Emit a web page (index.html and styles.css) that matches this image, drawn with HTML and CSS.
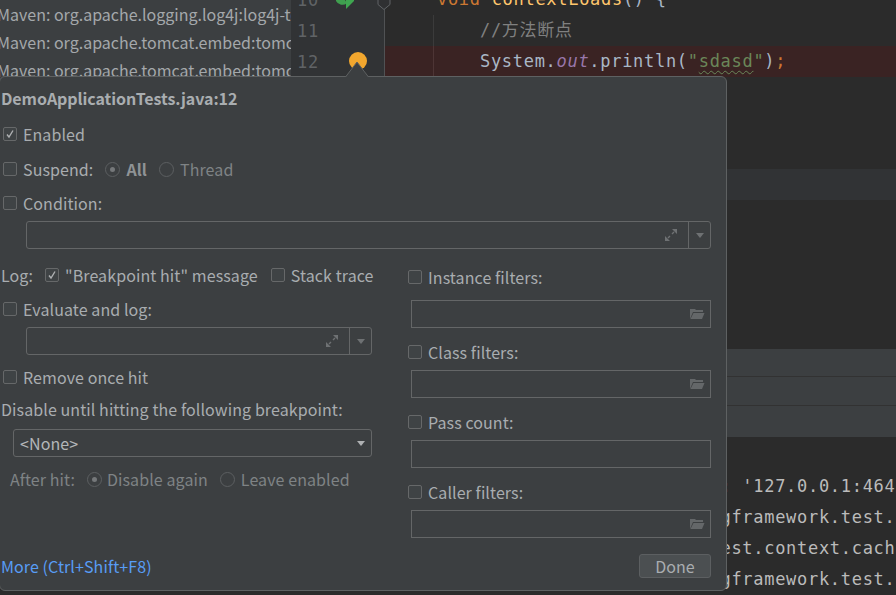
FILE: index.html
```html
<!DOCTYPE html>
<html lang="en">
<head>
<meta charset="utf-8">
<title>Breakpoint popup</title>
<link rel="stylesheet" href="styles.css">
</head>
<body>
<div class="app">
  <div class="upper">
    <div class="tree">
      <div class="tree-row">Maven: org.apache.logging.log4j:log4j-to-slf4j:2.13.3</div>
      <div class="tree-row">Maven: org.apache.tomcat.embed:tomcat-embed-core:9.0.37</div>
      <div class="tree-row">Maven: org.apache.tomcat.embed:tomcat-embed-websocket:9.0.37</div>
    </div>
    <div class="gutter">
      <div class="gutter-row"><span class="ln">10</span>
        <svg class="run-icon" width="20" height="10" viewBox="0 0 20 10"><path d="M1 1a7 7 0 0 0 11 2L10 0H1z" fill="#3f9f4f"/><path d="M11 0h8v1l-8 8z" fill="#3fa650"/></svg>
      </div>
      <div class="gutter-row"><span class="ln">11</span></div>
      <div class="gutter-row"><span class="ln">12</span><span class="bp"></span></div>
      <svg class="diamond" width="14" height="11" viewBox="0 0 14 11"><path d="M1 -4v8.500l6 5 6-5v-8.500" fill="#2f3032" stroke="#606366" stroke-width="1"/></svg>
    </div>
    <div class="code">
      <div class="code-row"><span class="kw">void</span> <span class="fn">contextLoads</span>() {</div>
      <div class="code-row code-in"><span class="cm">//方法断点</span></div>
      <div class="code-row code-in code-hit">System.<span class="fld">out</span>.println(<span class="str">"<span class="squig">sdasd</span>"</span>)<span class="kw">;</span></div>
    </div>
  </div>
  <div class="band"></div>
  <div class="blank"></div>
  <div class="tool-row tool-a"></div>
  <div class="tool-row tool-b"></div>
  <div class="tool-row tool-c"></div>
  <div class="console">
    <div class="con-line">: '127.0.0.1:46416', transport: 'socket'</div>
    <div class="con-line">gframework.test.context.support</div>
    <div class="con-line">est.context.cache.DefaultCache</div>
    <div class="con-line">gframework.test.context.support</div>
  </div>
</div>

<div class="popup">
  <svg class="caret" width="24" height="16" viewBox="0 0 24 16"><path d="M0.500 16L12 1l11.500 15" fill="#3c3f41" stroke="#5e6162" stroke-width="1"/></svg>
  <div class="title">DemoApplicationTests.java:12</div>
  <div class="row r-enabled">
    <span class="cb"><svg width="12" height="12" viewBox="0 0 12 12"><path d="M3 6.500l2 2.500 4-6.500" fill="none" stroke="#afb1b3" stroke-width="1.400"/></svg></span>
    <span>Enabled</span>
  </div>
  <div class="row r-suspend">
    <span class="cb"></span><span>Suspend:</span>
    <span class="radio on radio-all"></span><span class="dim-b">All</span>
    <span class="radio radio-thread"></span><span class="dim">Thread</span>
  </div>
  <div class="row r-cond"><span class="cb"></span><span>Condition:</span></div>
  <div class="field f-cond">
    <svg class="expand" width="14" height="14" viewBox="0 0 14 14"><path d="M8 1h5v5zM1 13V8l5 5z" fill="#6e7173"/><path d="M10 4L8 6M6 8L4 10" stroke="#6e7173" stroke-width="1.400"/></svg>
    <span class="drop"><i class="tri dimtri"></i></span>
  </div>

  <div class="cols">
    <div class="left">
      <div class="row log">
        <span class="log-label">Log:</span>
        <span class="cb"><svg width="12" height="12" viewBox="0 0 12 12"><path d="M3 6.500l2 2.500 4-6.500" fill="none" stroke="#afb1b3" stroke-width="1.400"/></svg></span>
        <span>"Breakpoint hit" message</span>
        <span class="cb cb-stack"></span><span>Stack trace</span>
      </div>
      <div class="row r-eval"><span class="cb"></span><span>Evaluate and log:</span></div>
      <div class="field f-eval">
        <svg class="expand" width="14" height="14" viewBox="0 0 14 14"><path d="M8 1h5v5zM1 13V8l5 5z" fill="#6e7173"/><path d="M10 4L8 6M6 8L4 10" stroke="#6e7173" stroke-width="1.400"/></svg>
        <span class="drop"><i class="tri dimtri"></i></span>
      </div>
      <div class="row r-remove"><span class="cb"></span><span>Remove once hit</span></div>
      <div class="plain r-disable">Disable until hitting the following breakpoint:</div>
      <div class="field f-select"><span class="sel-text">&lt;None&gt;</span><i class="tri"></i></div>
      <div class="row r-after dim">
        <span>After hit:</span>
        <span class="radio on radio-dis"></span><span>Disable again</span>
        <span class="radio radio-leave"></span><span>Leave enabled</span>
      </div>
    </div>
    <div class="right">
      <div class="row rr first"><span class="cb"></span><span>Instance filters:</span></div>
      <div class="field f-box f-first"><svg class="folder" width="16" height="12" viewBox="0 0 16 12"><path d="M1 1h5l1 1h7v2H4L1 11z" fill="#646769"/><path d="M4.500 5H15.500L13 11H1.500z" fill="#646769"/></svg></div>
      <div class="row rr"><span class="cb"></span><span>Class filters:</span></div>
      <div class="field f-box"><svg class="folder" width="16" height="12" viewBox="0 0 16 12"><path d="M1 1h5l1 1h7v2H4L1 11z" fill="#646769"/><path d="M4.500 5H15.500L13 11H1.500z" fill="#646769"/></svg></div>
      <div class="row rr"><span class="cb"></span><span>Pass count:</span></div>
      <div class="field f-box"></div>
      <div class="row rr"><span class="cb"></span><span>Caller filters:</span></div>
      <div class="field f-box"><svg class="folder" width="16" height="12" viewBox="0 0 16 12"><path d="M1 1h5l1 1h7v2H4L1 11z" fill="#646769"/><path d="M4.500 5H15.500L13 11H1.500z" fill="#646769"/></svg></div>
    </div>
  </div>

  <div class="footer">
    <a class="more">More (Ctrl+Shift+F8)</a>
    <button class="done">Done</button>
  </div>
</div>
</body>
</html>
```
FILE: styles.css
```css
* { box-sizing: border-box; }
html, body { margin: 0; padding: 0; width: 896px; height: 595px; overflow: hidden; background: #2b2b2b; }
body { position: relative; font-family: "Noto Sans CJK SC", "Noto Sans", sans-serif; font-size: 16px; letter-spacing: 0.09px; color: #a9adb0; }

/* background IDE */
.app { display: flex; flex-direction: column; height: 595px; overflow: hidden; }
.upper { display: flex; height: 169px; flex: none; }
.tree { width: 291px; background: #3c3f41; overflow: hidden; flex: none; letter-spacing: 0; }
.tree-row { height: 28px; line-height: 28px; white-space: nowrap; margin-left: -3px; color: #a4a8ab; }
.gutter { position: relative; z-index: 1; width: 94px; flex: none; background: #313335; border-right: 1px solid #505254; }
.gutter-row { position: relative; height: 31px; display: flex; align-items: center; }
.gutter-row:first-child { margin-top: -16px; }
.ln { font-family: "DejaVu Sans Mono", monospace; font-size: 17px; letter-spacing: 0.7px; color: #606366; margin-left: 6px; }
.run-icon { position: absolute; left: 44px; top: 16px; }
.bp { position: absolute; left: 58px; top: 6px; width: 18px; height: 18px; border-radius: 50%; background: #f2a72e; }
.diamond { position: absolute; left: 86px; top: 0; }
.code { flex: 1; background: #2b2b2b; overflow: hidden; font-family: "DejaVu Sans Mono", "Noto Sans CJK SC", monospace; font-size: 17px; letter-spacing: 0.7px; color: #a9b7c6; }
.code-row { height: 31px; line-height: 31px; white-space: pre; padding-left: 52px; }
.code-row:first-child { margin-top: -16px; }
.code-in { padding-left: 95px; background: linear-gradient(#3b3b3b, #3b3b3b) 48px 0 / 1px 100% no-repeat; }
.code-hit { background-color: #3a2323; background-image: linear-gradient(#4d3535, #4d3535); }
.kw { color: #cc7832; }
.fn { color: #ffc66d; }
.cm { color: #808080; }
.fld { color: #9876aa; font-style: italic; }
.str { color: #6a8759; }
.squig { text-decoration: underline wavy #6a8759 1px; text-underline-offset: 3px; }
.band { height: 31px; background: #313335; flex: none; }
.blank { height: 149px; background: #2b2b2b; flex: none; }
.tool-row { background: #3c3f41; flex: none; }
.tool-a { height: 28px; border-bottom: 1px solid #323232; }
.tool-b { height: 29px; border-bottom: 1px solid #323232; }
.tool-c { height: 31px; }
.console { flex: 1; background: #2b2b2b; padding: 34px 0 0 720.500px; font-family: "DejaVu Sans Mono", monospace; font-size: 17px; letter-spacing: 0.7px; color: #bbbbbb; overflow: hidden; }
.con-line { height: 31px; line-height: 31px; white-space: pre; }

/* popup */
.popup { position: absolute; z-index: 2; left: -1px; top: 76px; width: 728px; height: 515px; background: #3c3f41; border: 1px solid #5e6162; border-radius: 6px; padding: 9px 15px 0 0; }
.caret { position: absolute; left: 345px; top: -16px; }
.title { height: 24px; line-height: 24px; font-weight: 700; letter-spacing: -0.07px; padding-left: 1px; }
.row { display: flex; align-items: center; height: 22px; padding-left: 3px; white-space: nowrap; }
.plain { height: 22px; line-height: 22px; white-space: nowrap; padding-left: 1px; }
.cb { width: 14px; height: 14px; flex: none; border: 1px solid #666869; border-radius: 2px; margin-right: 6px; display: flex; align-items: center; justify-content: center; background: #3f4345; }
.radio { position: relative; width: 15px; height: 15px; border: 1px solid #5c5f61; border-radius: 50%; flex: none; display: block; }
.radio.on::after { content: ""; position: absolute; left: 4px; top: 4px; width: 5px; height: 5px; border-radius: 50%; background: #75787a; }
.dim { color: #7f8385; }
.dim-b { color: #8f9395; font-weight: 700; }
.r-enabled { margin-top: 13px; }
.r-suspend { margin-top: 13px; }
.r-cond { margin-top: 12px; }
.radio-all { margin-left: 12px; margin-right: 6px; }
.radio-thread { margin-left: 12px; margin-right: 6px; }
.field { position: relative; height: 28px; border: 1px solid #646667; border-radius: 3px; display: flex; align-items: center; justify-content: flex-end; }
.f-cond { margin: 7px 0 0 26px; }
.drop { width: 22px; height: 26px; border-left: 1px solid #646667; display: flex; align-items: center; justify-content: center; flex: none; }
.tri { display: block; width: 0; height: 0; border-left: 4px solid transparent; border-right: 4px solid transparent; border-top: 5px solid #afb1b3; flex: none; }
.dimtri { border-top-color: #6e7173; }
.expand { margin-right: 10px; }
.cols { display: grid; grid-template-columns: 408px 1fr; margin-top: 15px; }
.left { padding-right: 36px; }
.log { padding-left: 1px; }
.log-label { margin-right: 12px; }
.cb-stack { margin-left: 13px; }
.r-eval { margin-top: 12px; }
.f-eval { margin: 7px 0 0 26px; }
.r-remove { margin-top: 11px; }
.r-disable { margin-top: 10px; }
.f-select { margin: 9px 0 0 13px; justify-content: space-between; padding: 0 6px 0 6px; }
.sel-text { color: #b3b6b8; }
.r-after { margin-top: 11px; padding-left: 10px; }
.radio-dis { margin-left: 12px; margin-right: 5px; }
.radio-leave { margin-left: 12px; margin-right: 6px; }
.rr { padding-left: 0; margin-top: 13px; }
.rr.first { margin-top: 2px; }
.f-box { margin: 7px 0 0 3px; border-radius: 0; }
.f-first { margin-top: 12px; }
.folder { margin-right: 5px; }
.footer { display: flex; align-items: center; justify-content: space-between; margin-top: 16px; height: 24px; padding-left: 1px; }
.more { color: #589df6; }
.done { width: 72px; height: 24px; font: inherit; letter-spacing: inherit; color: #a9adb0; background: #4b4f51; border: 1px solid #5c5f61; border-radius: 3px; padding: 0; line-height: 20px; }
```
